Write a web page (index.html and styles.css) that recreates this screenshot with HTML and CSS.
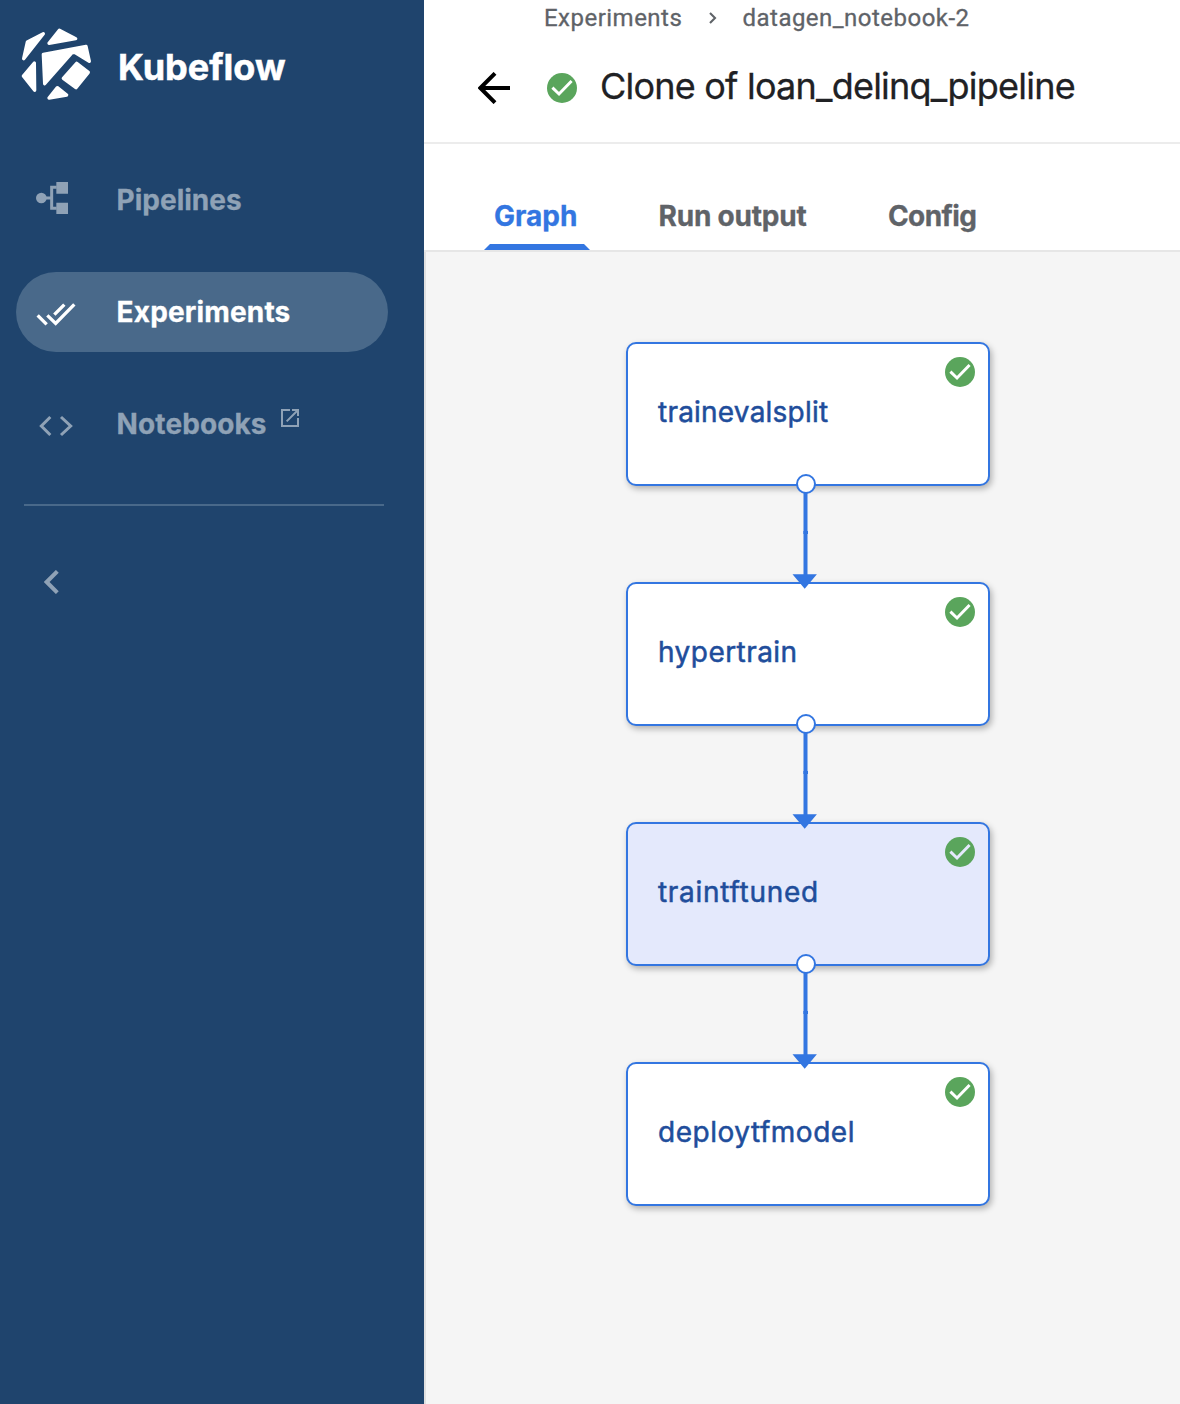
FILE: index.html
```html
<!DOCTYPE html>
<html lang="en">
<head>
<meta charset="utf-8">
<title>Kubeflow</title>
<link rel="stylesheet" href="styles.css">
</head>
<body>
<svg class="defs" width="0" height="0" aria-hidden="true">
  <symbol id="success" viewBox="-15 -15 30 30">
    <circle r="15" fill="#5aa55c"/>
    <path d="M-9.6 -.3 L-3 6 L9.6 -7" fill="none" stroke="currentColor" stroke-width="3"/>
  </symbol>
</svg>
<div class="app">
  <aside class="sidebar">
    <div class="brand">
      <svg class="logo" viewBox="60 48 216 228">
        <path d="M71 146 L82 96 L130 71Z M147 100 L178 61 L227 86Z M130 133 L258 109 L268 154 L224 127 L216 128 L134 221Z M230 160 L265 187 L228 233 L190 205Z M103 159 L104 241 L70 198Z M172 233 L200 255 L147 264Z"/>
      </svg>
      <span class="brand-name">Kubeflow</span>
    </div>
    <nav class="nav">
      <a class="item">
        <svg class="i-pipe" viewBox="78 66 96 96"><circle cx="94" cy="114" r="16"/><path d="M139 66h35v35h-35z M139 128h35v34h-35z"/><path class="line" d="M94 114H125 M140 82H125V145H140"/></svg>
        <span class="label pipelines">Pipelines</span>
      </a>
      <a class="item active">
        <svg class="i-exp" viewBox="78 426 120 72"><path class="line" d="M83 466L110 493 M112 466L137 490L193 433 M133 464L163 434"/></svg>
        <span class="label experiments">Experiments</span>
      </a>
      <a class="item">
        <svg class="i-code" viewBox="87 105 102 66"><path class="line" d="M121 111L94 138L121 165 M153 111L182 138L153 165"/></svg>
        <span class="label notebooks">Notebooks</span>
        <svg class="i-open" viewBox="813 87 54 54"><path class="line" d="M840 90H816V138H864V114 M846 90H864V108 M864 90L830 124"/></svg>
      </a>
    </nav>
    <hr class="divider">
    <svg class="i-collapse" viewBox="102 570 45 72"><path class="line" d="M142 574L110 606L142 638"/></svg>
  </aside>
  <main class="main">
    <header class="header">
      <div class="crumbs">
        <span class="crumb-a">Experiments</span>
        <svg class="i-sep" viewBox="0 0 8 12"><path d="M1 1L6 6L1 11"/></svg>
        <span class="crumb-b">datagen_notebook-2</span>
      </div>
      <div class="title-row">
        <svg class="i-back" viewBox="162 216 96 96"><path d="M258 264H170 M213 220L169 264L213 308"/></svg>
        <svg class="status"><use href="#success"/></svg>
        <h1 class="title">Clone of loan_delinq_pipeline</h1>
      </div>
    </header>
    <div class="tabs">
      <span class="tab selected"><span class="t-graph">Graph</span></span>
      <span class="tab"><span class="t-run">Run output</span></span>
      <span class="tab"><span class="t-config">Config</span></span>
    </div>
    <section class="canvas">
      <div class="node n1"><span>trainevalsplit</span><svg class="status"><use href="#success"/></svg></div>
      <div class="node n2"><span>hypertrain</span><svg class="status"><use href="#success"/></svg></div>
      <div class="node n3 picked"><span>traintftuned</span><svg class="status"><use href="#success"/></svg></div>
      <div class="node n4"><span>deploytfmodel</span><svg class="status"><use href="#success"/></svg></div>
      <svg class="edge e1" viewBox="0 0 30 120"><path d="M11.5 18h4v84h-4z M11.2 57h4.8v3h-4.8z M.5 100.3h24.4L12.7 114.7z"/><circle cx="14" cy="10" r="9"/></svg>
      <svg class="edge e2" viewBox="0 0 30 120"><path d="M11.5 18h4v84h-4z M11.2 57h4.8v3h-4.8z M.5 100.3h24.4L12.7 114.7z"/><circle cx="14" cy="10" r="9"/></svg>
      <svg class="edge e3" viewBox="0 0 30 120"><path d="M11.5 18h4v84h-4z M11.2 57h4.8v3h-4.8z M.5 100.3h24.4L12.7 114.7z"/><circle cx="14" cy="10" r="9"/></svg>
    </section>
  </main>
</div>
</body>
</html>
```
FILE: styles.css
```css
* { box-sizing: border-box; }
body { margin: 0; font-family: Inter, "Liberation Sans", sans-serif; }
svg { display: block; flex: none; }
.defs { position: absolute; }
.app { display: flex; width: 1180px; height: 1404px; overflow: hidden; }
.line { fill: none; stroke: currentColor; stroke-width: 9; }

.sidebar { width: 424px; flex: none; background: #1f446d; color: #8fa2b6; }
.brand { display: flex; height: 232px; padding: 26px 0 0 20px; color: #fff; }
.logo { width: 72px; height: 76px; fill: #fff; stroke: #fff; stroke-width: 10; stroke-linejoin: round; }
.brand-name { margin-left: 26px; line-height: 82px; font-size: 36px; font-weight: 700; -webkit-text-stroke: .5px #fff; white-space: nowrap; }
.nav { display: flex; flex-direction: column; gap: 32px; margin: -72px 0 0 16px; }
.item { display: flex; align-items: center; height: 80px; width: 372px; padding-left: 20px; border-radius: 40px; fill: currentColor; }
.item.active { background: #49698a; color: #fff; }
.label { font-size: 28px; font-weight: 700; line-height: 40px; -webkit-text-stroke: .3px currentColor; white-space: nowrap; }
.experiments { letter-spacing: .15px; }
.notebooks { letter-spacing: .1px; }
.i-pipe { width: 32px; height: 32px; margin: -4px 48.6px 0 0; }
.i-exp { width: 40px; height: 24px; margin: 4px 40.6px 0 0; }
.i-exp .line { stroke-width: 10; }
.i-code { width: 34px; height: 22px; margin: 4px 43.6px 0 3px; }
.i-open { width: 18px; height: 18px; margin: -12px 0 0 14.4px; }
.i-open .line { stroke-width: 6; }
.divider { height: 2px; width: 360px; margin: 40px 0 64px 24px; border: 0; background: #49698a; }
.i-collapse { width: 15px; height: 24px; margin-left: 44px; }
.i-collapse .line { stroke-width: 12; }

.main { flex: 1; display: flex; flex-direction: column; background: #fff; }
.header { height: 144px; border-bottom: 2px solid #ececec; }
.crumbs { display: flex; align-items: center; height: 36px; padding-left: 120px; font: 400 24px/36px Roboto, sans-serif; letter-spacing: .48px; -webkit-text-stroke: .3px #5f6368; color: #5f6368; white-space: nowrap; }
.i-sep { width: 8px; height: 12px; fill: none; stroke: #5f6368; stroke-width: 2.1; }
.crumb-a { width: 164.5px; }
.crumb-b { margin-left: 26px; }
.title-row { display: flex; align-items: center; height: 104px; padding-left: 54px; color: #fff; }
.i-back { width: 32px; height: 32px; fill: none; stroke: #000; stroke-width: 12; }
.status { width: 30px; height: 30px; }
.title-row .status { margin: 0 23px 0 37px; }
.title { margin: -4px 0 0; font-size: 36px; font-weight: 400; letter-spacing: -.78px; color: #202124; -webkit-text-stroke: .3px #202124; white-space: nowrap; }
.tabs { display: flex; align-items: flex-end; height: 108px; padding-left: 60px; border-bottom: 2px solid #e6e6e6; font-size: 28px; font-weight: 700; color: #5f6368; -webkit-text-stroke: .3px currentColor; white-space: nowrap; }
.tab { height: 66px; padding: 12px 0 0 10px; line-height: 40px; }
.tab:nth-child(1) { width: 164.5px; }
.tab:nth-child(2) { width: 229.5px; }
.t-run { letter-spacing: -.2px; }
.t-config { letter-spacing: -.6px; }
.selected { color: #3376e1; }
.selected::after { content: ""; display: block; width: 106px; height: 6px; margin: 8px 0 0 -10px; background: #3376e1; clip-path: polygon(6px 0, 100px 0, 100% 100%, 0 100%); }

.canvas { position: relative; flex: 1; border-left: 2px solid #e0e0e0; background: #f5f5f5; }
.node { position: absolute; left: 200px; display: flex; justify-content: space-between; width: 364px; height: 144px; padding: 13px 13px 0 30px; border: 2px solid #3376e1; border-radius: 10px; background: #fff; box-shadow: 2px 3px 6px rgba(0,0,0,.28); color: #fff; }
.node span { margin-top: 35px; height: 40px; line-height: 40px; font-size: 28px; font-weight: 400; color: #204d9b; -webkit-text-stroke: .5px #204d9b; font-variant-ligatures: normal; white-space: nowrap; }
.n1 { top: 90px; letter-spacing: .22px; }
.n2 { top: 330px; letter-spacing: .45px; }
.n3 { top: 570px; letter-spacing: .7px; }
.n4 { top: 810px; letter-spacing: .52px; }
.node.picked { background: #e4e9fc; color: #e4e9fc; }
.edge { position: absolute; left: 366px; width: 30px; height: 120px; fill: #3376e1; }
.edge circle { fill: #fff; stroke: #3376e1; stroke-width: 2; }
.e1 { top: 222px; }
.e2 { top: 462px; }
.e3 { top: 702px; }
```
